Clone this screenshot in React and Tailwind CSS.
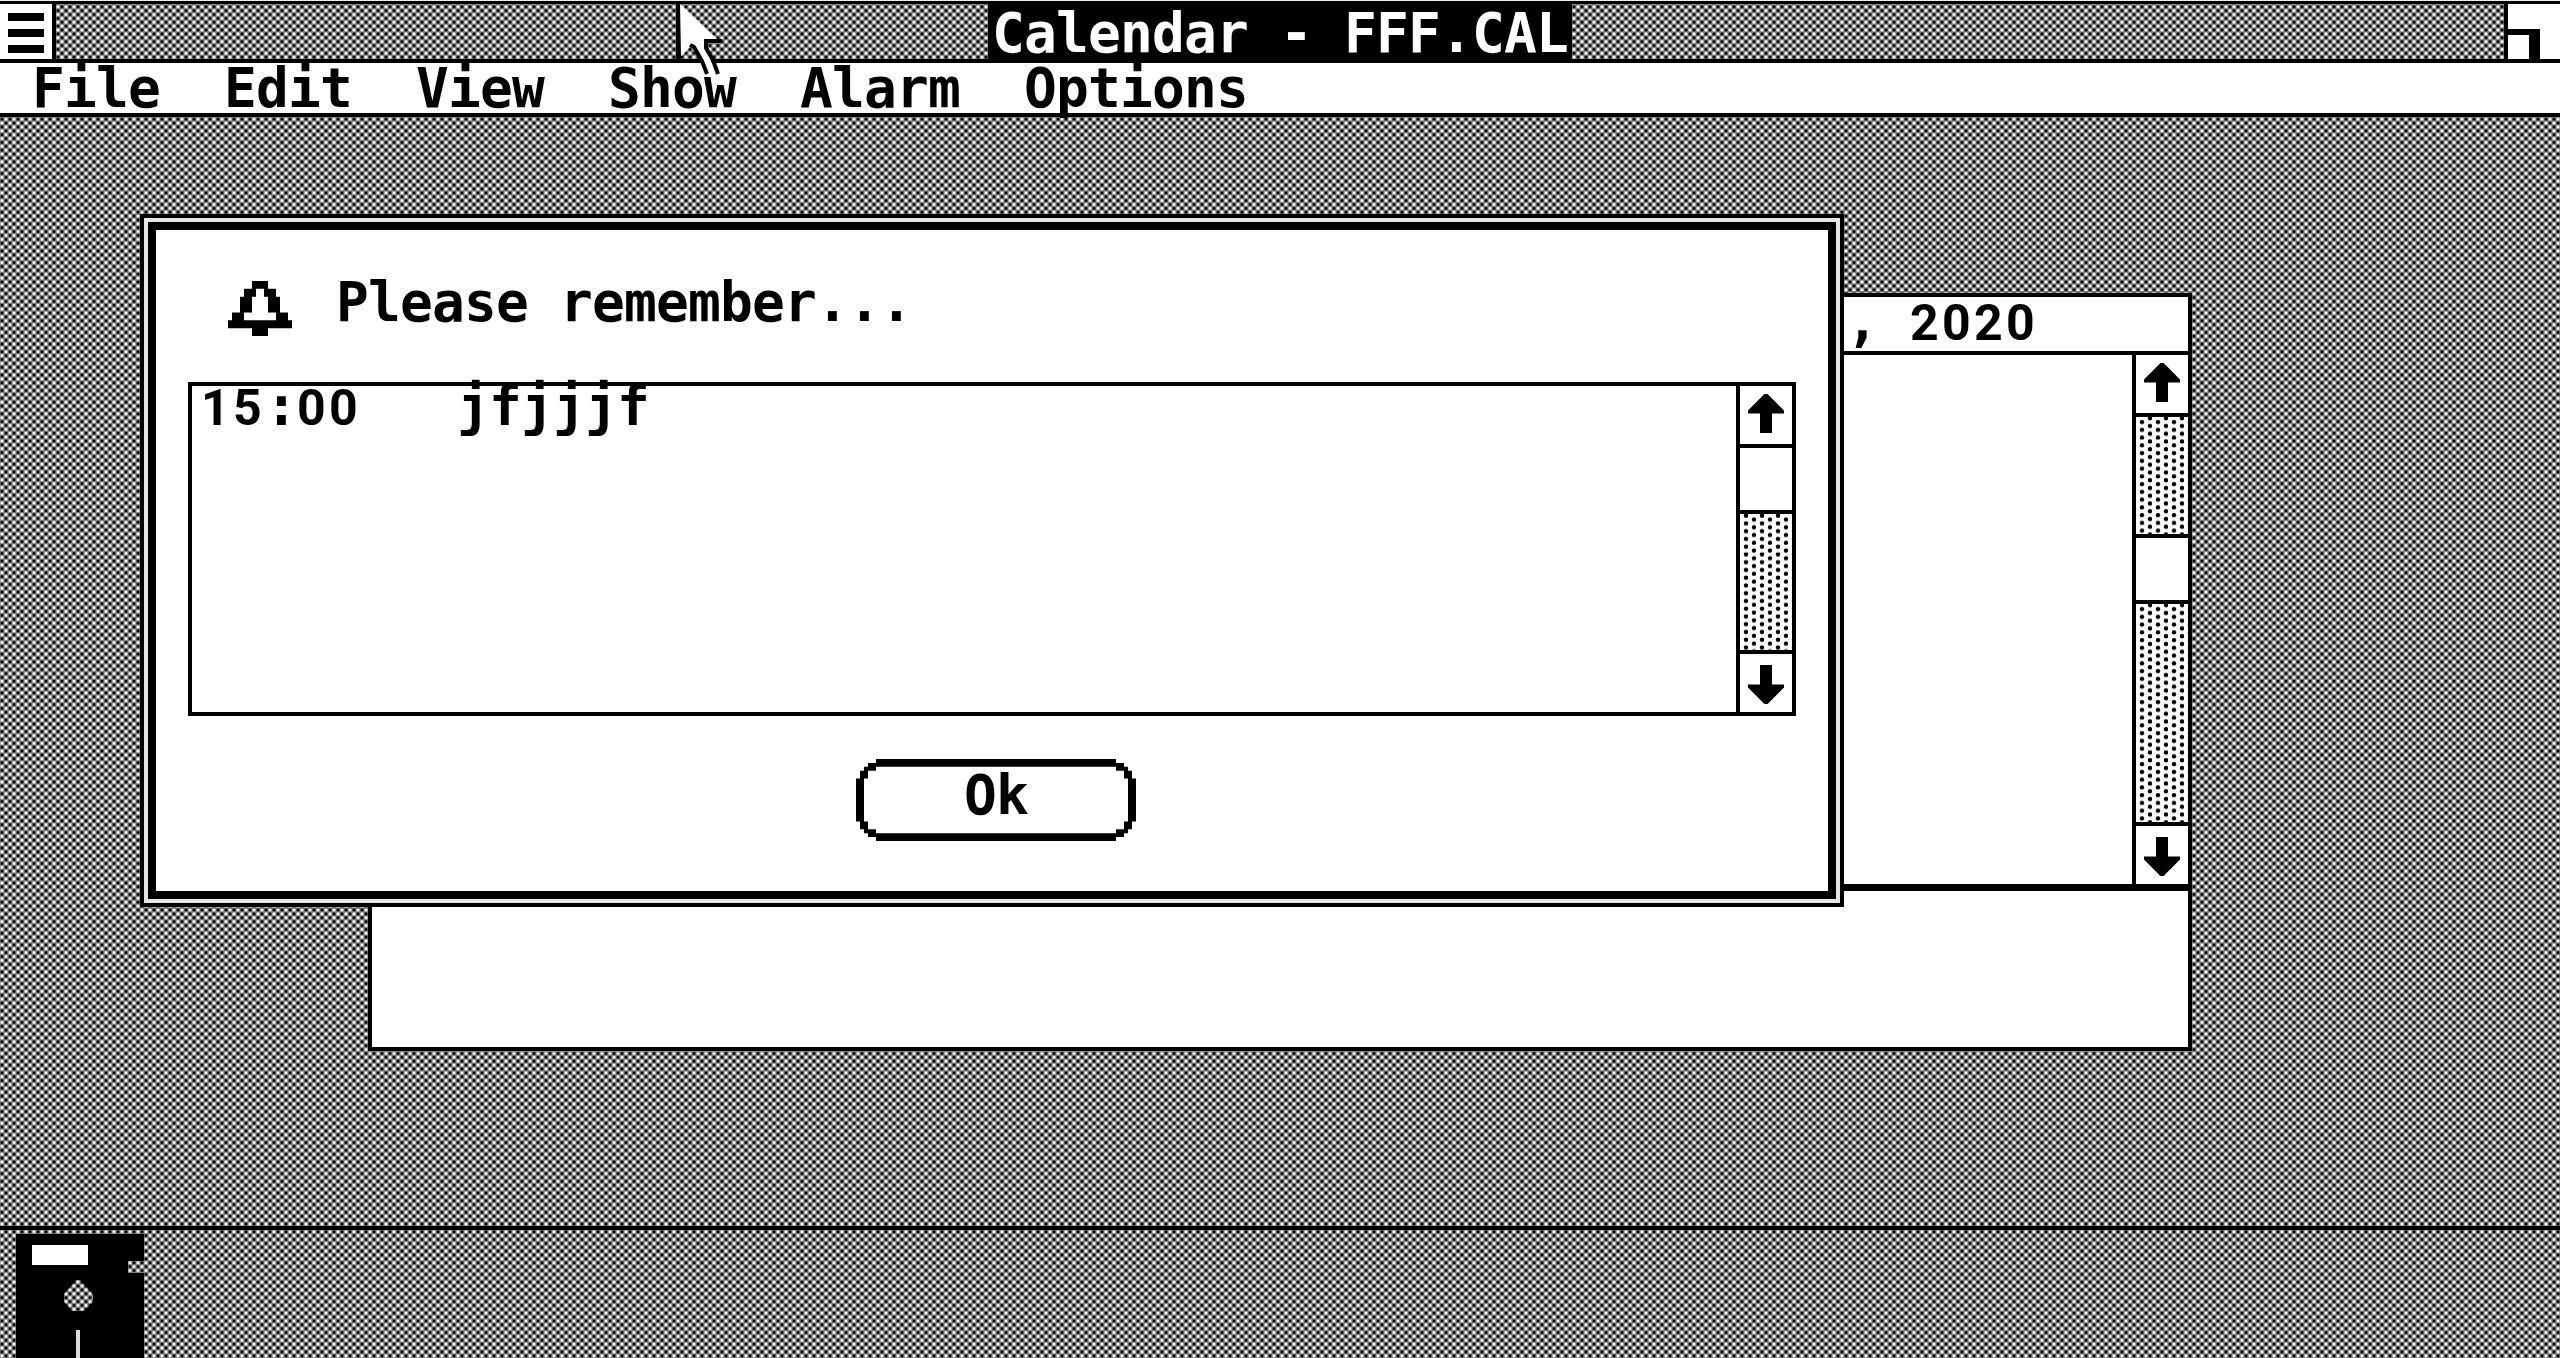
const DITHER =
  "bg-black [background-blend-mode:exclusion] [background-image:repeating-linear-gradient(90deg,#fff_1.4px,#fff_2.6px,#000_5.4px,#000_6.6px,#fff_9.4px),repeating-linear-gradient(180deg,#fff_2.3px,#fff_3.5px,#000_6.18px,#000_7.38px,#fff_10.053px)]";
const TEXT = "whitespace-pre font-['DejaVu_Sans_Mono',monospace] text-[54.5px] font-bold tracking-[-0.81px]";
const DIGITS = "font-['Roboto',sans-serif] text-[50px] tracking-[3.3px]";

const MENUS = [
  ["File", "w-[192px]"],
  ["Edit", "w-[192px]"],
  ["View", "w-[192px]"],
  ["Show", "w-[192px]"],
  ["Alarm", "w-[224px]"],
  ["Options", "w-[224px]"],
];

function Arrow({ down }) {
  return (
    <svg viewBox="0 0 9 10" preserveAspectRatio="none" className={down ? "h-[39px] w-9 rotate-180" : "h-[39px] w-9"}>
      <path d="M4.1 0H4.9L9 4.2V5H6V10H3V5H0V4.2Z" />
    </svg>
  );
}

function Dots({ id, odd, className }) {
  const a = odd ? 9.4 : 5;
  const b = odd ? 5.5 : 1.2;
  return (
    <svg className={className}>
      <pattern id={id} width="16" height="7.753" patternUnits="userSpaceOnUse">
        <circle cx="6" cy={a % 7.753} r="2.2" />
        <circle cx="6" cy={(a % 7.753) + 7.753} r="2.2" />
        <circle cx="6" cy={(a % 7.753) - 7.753} r="2.2" />
        <circle cx="14" cy={b} r="2.2" />
        <circle cx="14" cy={b + 7.753} r="2.2" />
      </pattern>
      <rect width="100%" height="100%" fill={`url(#${id})`} />
    </svg>
  );
}

function ArrowBox({ down }) {
  return (
    <div className={down ? "flex h-[58px] justify-center border-black pt-[11px]" : "flex h-[62px] justify-center border-b-4 border-black pt-2"}>
      <Arrow down={down} />
    </div>
  );
}

function Bell() {
  return (
    <svg viewBox="0 0 16 14" preserveAspectRatio="none" className="h-[55px] w-16">
      <path
        fillRule="evenodd"
        d="M6 0H10V2H12V4H13V8H15V10H16V12H10V14H6V12H0V10H1V8H3V4H4V2H6ZM7 2H9V4H10V8H12V10H4V8H6V4H7Z"
      />
    </svg>
  );
}

function TitleBar() {
  return (
    <div className="flex h-[63px] border-t border-[#e6efeb]">
      <div className="flex h-[62px] w-full border-t-[3px] border-b-4 border-black">
        <div className="flex w-14 flex-col gap-2 border-r-4 border-black bg-white pt-[9px] pl-2">
          <div className="h-2 w-9 bg-black" />
          <div className="h-2 w-9 bg-black" />
          <div className="h-2 w-9 bg-black" />
        </div>
        <div className="ml-[932px] h-full w-[584px] bg-black pl-1">
          <div className={`${TEXT} leading-[58px] text-white`}>Calendar - FFF.CAL</div>
        </div>
        <div className="ml-auto h-full w-14 border-l-4 border-black bg-white pt-[25px]">
          <div className="h-[30px] w-8 border-t-[6px] border-r-[11px] border-black" />
        </div>
      </div>
    </div>
  );
}

function CalendarWindow() {
  return (
    <div className="absolute top-[293px] left-[368px] flex h-[758px] w-[1824px] flex-col border-4 border-black bg-white">
      <div className="h-[58px] border-b-4 border-black pl-[1474px]">
        <div className={`${TEXT} leading-[49px]`}>
          , <span className={DIGITS}>2020</span>
        </div>
      </div>
      <div className="flex h-[536px] justify-end border-b-[7px] border-black">
        <div className="flex w-14 flex-col border-l-4 border-black">
          <ArrowBox />
          <Dots id="day-above" className="h-[117px] w-full" />
          <div className="h-[70px] border-y-4 border-black" />
          <Dots id="day-below" className="h-[218px] w-full" />
          <div className="border-t-4 border-black">
            <ArrowBox down />
          </div>
        </div>
      </div>
    </div>
  );
}

function OkButton() {
  return (
    <button className="relative mt-[43px] ml-[700px] h-[82px] w-[280px]">
      <svg viewBox="0 0 70 21" preserveAspectRatio="none" className="absolute inset-0 h-full w-full">
        <path
          fillRule="evenodd"
          d="M5 0H65V1H67V2H68V3H69V5H70V16H69V18H68V19H67V20H65V21H5V20H3V19H2V18H1V16H0V5H1V3H2V2H3V1H5ZM5 2V3H3V5H2V16H3V18H5V19H65V18H67V16H68V5H67V3H65V2Z"
        />
      </svg>
      <div className={`${TEXT} relative h-full text-center leading-[73px]`}>Ok</div>
    </button>
  );
}

function AlarmDialog() {
  return (
    <div className="absolute top-[214px] left-[140px] h-[693px] w-[1704px] border-4 border-black bg-[#e6e6e6] p-1">
      <div className="h-full border-8 border-black bg-white">
        <div className="flex h-[152px] items-start gap-[44px] pt-[51px] pl-[72px]">
          <Bell />
          <div className={`${TEXT} leading-[42px]`}>Please remember...</div>
        </div>
        <div className="ml-8 flex h-[334px] w-[1608px] justify-between border-4 border-black">
          <div className={`${TEXT} pl-[9px] leading-[41px]`}>
            <span className={DIGITS}>15</span>:<span className={DIGITS}>00</span>
            {"  "} jfjjjf
          </div>
          <div className="flex w-14 flex-col border-l-4 border-black">
            <ArrowBox />
            <div className="h-[66px] border-b-4 border-black" />
            <Dots id="alarm-below" odd className="h-[136px] w-full" />
            <div className="border-t-4 border-black">
              <ArrowBox down />
            </div>
          </div>
        </div>
        <OkButton />
      </div>
    </div>
  );
}

function Floppy() {
  return (
    <svg viewBox="0 0 128 124" className="mt-1 ml-4 h-[124px] w-32">
      <path
        fillRule="evenodd"
        d="M0 0H128V27H112V39H128V124H0ZM60 46L48 60V68L56 77H68L77 68V60L64 46Z"
      />
      <rect x="16" y="11" width="56" height="20" fill="#fff" />
      <rect x="60" y="96" width="4" height="28" fill="#ddd" />
    </svg>
  );
}

function Pointer() {
  return (
    <svg viewBox="676 0 52 80" className="absolute top-0 left-[676px] h-20 w-[52px]">
      <path d="M676 4H681V59H676Z" />
      <path d="M680 4L717 39L704 40L706 49L717 75H707L696 48L693 44L681 56Z" fill="#fff" />
      <path d="M690 45L694 47L702 61L707 74" fill="none" stroke="#000" strokeWidth="4" />
      <path d="M722 41H706V48L713 60L718 74" fill="none" stroke="#000" strokeWidth="4" />
    </svg>
  );
}

export default function App() {
  return (
    <div className={`relative flex h-[1358px] w-[2560px] flex-col overflow-hidden text-black ${DITHER}`}>
      <TitleBar />
      <div className={`${TEXT} flex h-[54px] border-b-4 border-black bg-white pl-8 leading-[51px]`}>
        {MENUS.map(([name, width]) => (
          <div key={name} className={width}>
            {name}
          </div>
        ))}
      </div>
      <div className="flex-1" />
      <div className="h-[132px] border-t-4 border-black">
        <Floppy />
      </div>
      <CalendarWindow />
      <AlarmDialog />
      <Pointer />
    </div>
  );
}
